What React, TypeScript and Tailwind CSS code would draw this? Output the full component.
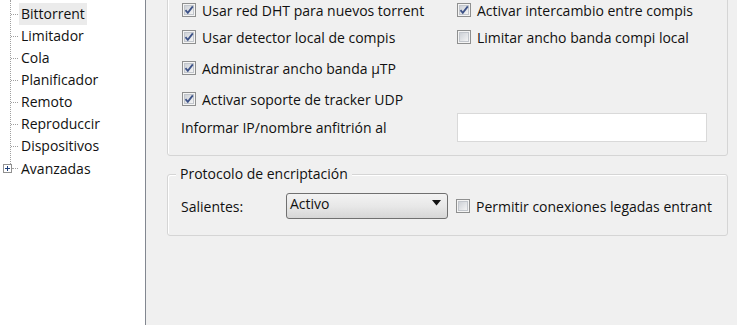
import type { ReactNode } from 'react'

const font = { fontFamily: '"Open Sans", "Noto Sans", "Liberation Sans", sans-serif' }

function CheckBox({ checked }: { checked?: boolean }) {
  return (
    <svg width="14" height="14" viewBox="0 0 14 14" className="shrink-0">
      <defs>
        <linearGradient id="cbInner" x1="0" y1="0" x2="1" y2="1">
          <stop offset="0" stopColor="#cbcfd5" />
          <stop offset="1" stopColor="#f6f6f6" />
        </linearGradient>
      </defs>
      <rect x="0.5" y="0.5" width="13" height="13" fill="#f4f4f4" stroke="#8e8f8f" />
      <rect x="2.5" y="2.5" width="9" height="9" fill="url(#cbInner)" stroke="#c2c6cc" />
      {checked && (
        <path d="M3.5 7.2 L5.8 9.8 L10.8 3.4" fill="none" stroke="#3d5287" strokeWidth="1.8" />
      )}
    </svg>
  )
}

function Option({ checked, children }: { checked?: boolean; children: ReactNode }) {
  return (
    <div className="flex items-center gap-[6px] whitespace-nowrap">
      <CheckBox checked={checked} />
      <span className="leading-[15px]">{children}</span>
    </div>
  )
}

const treeItems = ['Bittorrent', 'Limitador', 'Cola', 'Planificador', 'Remoto', 'Reproduccir', 'Dispositivos']

function Tree() {
  return (
    <div className="relative pt-[3px]">
      {/* vertical dotted guide */}
      <div className="absolute left-[10px] top-0 h-[164px] border-l border-dotted border-[#a0a0a0]" />
      {treeItems.map((item, i) => (
        <div key={item} className="flex h-[22px] items-center">
          <div className="ml-[11px] w-[7px] border-t border-dotted border-[#a0a0a0]" />
          <span
            className={
              'ml-[1px] px-[2px] leading-[22px] ' + (i === 0 ? 'bg-[#ebebeb]' : '')
            }
          >
            {item}
          </span>
        </div>
      ))}
      <div className="flex h-[22px] items-center">
        <div className="ml-[3px] flex h-[9px] w-[9px] items-center justify-center border border-[#919191] bg-white">
          <svg width="7" height="7" viewBox="0 0 7 7">
            <path d="M1 3.5 H6 M3.5 1 V6" stroke="#1e3f7a" strokeWidth="1" />
          </svg>
        </div>
        <div className="w-[6px] border-t border-dotted border-[#a0a0a0]" />
        <span className="ml-[1px] px-[2px]">Avanzadas</span>
      </div>
    </div>
  )
}

export default function App() {
  return (
    <div
      className="flex h-[325px] w-[737px] overflow-hidden bg-[#f0f0f0] text-[14px] text-[#111]"
      style={font}
    >
      {/* Left navigation tree */}
      <div className="w-[146px] shrink-0 border-r border-[#828790] bg-white">
        <Tree />
      </div>

      {/* Settings pane */}
      <div className="flex-1 pl-[21px]">
        {/* Upper group box, its top lies above the visible area */}
        <div className="-mt-[24px] h-[180px] w-[561px] rounded-[3px] border border-[#d5d5d5] pl-[14px] pt-[19px] shadow-[inset_1px_1px_0_#ffffff]">
          <div className="grid h-[28px] grid-cols-[275px_1fr] items-center">
            <Option checked>Usar red DHT para nuevos torrent</Option>
            <Option checked>Activar intercambio entre compis</Option>
          </div>
          <div className="grid h-[26px] grid-cols-[275px_1fr] items-center">
            <Option checked>Usar detector local de compis</Option>
            <Option>Limitar ancho banda compi local</Option>
          </div>
          <div className="flex h-[36px] items-center">
            <Option checked>Administrar ancho banda µTP</Option>
          </div>
          <div className="flex h-[26px] items-center">
            <Option checked>Activar soporte de tracker UDP</Option>
          </div>
          <div className="grid h-[31px] grid-cols-[275px_1fr] items-center">
            <span className="-ml-[1px]">Informar IP/nombre anfitrión al</span>
            <div className="h-[29px] w-[250px] border border-[#d9d9d9] bg-white" />
          </div>
        </div>

        {/* Encryption group box */}
        <div className="relative mt-[18px] h-[62px] w-[561px] rounded-[3px] border border-[#d5d5d5] shadow-[inset_1px_1px_0_#ffffff]">
          <span className="absolute -top-[11px] left-[8px] bg-[#f0f0f0] px-[4px] leading-[20px]">
            Protocolo de encriptación
          </span>
          <div className="flex items-center pl-[13px] pt-[18px]">
            <span className="w-[105px]">Salientes:</span>
            <div className="flex h-[26px] w-[162px] items-start justify-between rounded-[3px] border border-[#707070] bg-gradient-to-b from-[#f3f3f3] via-[#e8e8e8] to-[#d6d6d6] pl-[3px] pr-[6px]">
              <span className="leading-[20px]">Activo</span>
              <svg width="9" height="6" viewBox="0 0 9 6" className="mt-[6px]">
                <path d="M0 0 H9 L4.5 5.5 Z" fill="#111" />
              </svg>
            </div>
            <div className="ml-[8px]">
              <Option>Permitir conexiones legadas entrant</Option>
            </div>
          </div>
        </div>
      </div>
    </div>
  )
}
